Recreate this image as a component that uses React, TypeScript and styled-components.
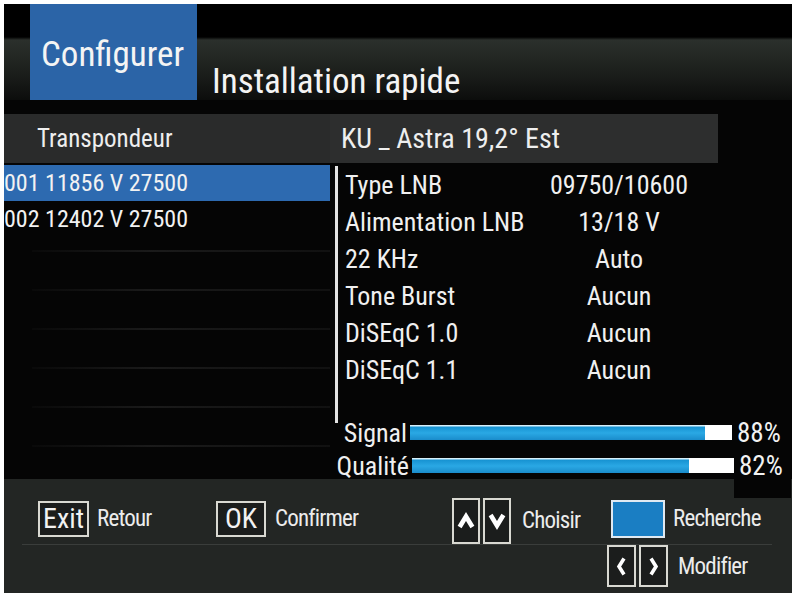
import React from 'react';
import styled, { createGlobalStyle } from 'styled-components';

const GlobalStyle = createGlobalStyle`
  html, body {
    margin: 0;
    padding: 0;
    background: #ffffff;
  }
  * {
    box-sizing: border-box;
  }
`;

const Frame = styled.div`
  width: 795px;
  height: 596px;
  padding: 4px 3px 3px 4px;
  background: #ffffff;
  font-family: Roboto, "Open Sans", "Liberation Sans", sans-serif;
  font-stretch: 75%;
  color: #f2f2f2;
`;

const Screen = styled.div`
  width: 100%;
  height: 100%;
  background: #050505;
  display: flex;
  flex-direction: column;
  overflow: hidden;
`;

const Header = styled.div`
  flex-shrink: 0;
  height: 96px;
  display: flex;
  align-items: flex-end;
  padding-left: 26px;
  background: linear-gradient(
    to bottom,
    #000 0px,
    #000 33px,
    #2b302c 36px,
    #1b1e1b 70px,
    #0c0d0c 96px
  );
`;

const Tab = styled.div`
  width: 167px;
  height: 96px;
  background: #2b64a7;
  display: flex;
  align-items: center;
  padding: 4px 0 0 11px;
  font-size: 35px;
  color: #f4f4f4;
`;

const Title = styled.div`
  margin-left: 15px;
  font-size: 35px;
  color: #f4f4f4;
  line-height: 36px;
`;

const HeadRow = styled.div`
  flex-shrink: 0;
  margin-top: 14px;
  height: 49px;
  display: flex;
`;

const HeadCell = styled.div<{ $w: number; $bg: string; $size: number; $pad: number }>`
  width: ${(p) => p.$w}px;
  background: ${(p) => p.$bg};
  padding-left: ${(p) => p.$pad}px;
  display: flex;
  align-items: center;
  font-size: ${(p) => p.$size}px;
  color: #eeeeee;
  white-space: nowrap;
`;

const Body = styled.div`
  flex: 1;
  display: flex;
  min-height: 0;
`;

const List = styled.div`
  width: 326px;
  padding-top: 2px;
  display: flex;
  flex-direction: column;
`;

const ListRow = styled.div<{ $active?: boolean }>`
  height: 36px;
  flex-shrink: 0;
  display: flex;
  align-items: center;
  font-size: 24px;
  color: #f2f2f2;
  background: ${(p) => (p.$active ? '#2d6ab0' : 'transparent')};
`;

const EmptyRow = styled.div`
  height: 39px;
  flex-shrink: 0;
  margin-left: 28px;
  background: linear-gradient(
      to right,
      rgba(50, 50, 50, 0.1),
      rgba(48, 48, 48, 0.5) 40%,
      rgba(44, 44, 44, 0.3)
    )
    bottom / 100% 2px no-repeat;

  &:nth-child(3) {
    margin-top: -24px;
  }
`;

const Details = styled.div`
  flex: 1;
  display: flex;
  flex-direction: column;
  padding-top: 3px;
`;

const Params = styled.div`
  flex-shrink: 0;
  margin-left: 5px;
  border-left: 3px solid #e4e4e4;
  height: 257px;
  padding-left: 7px;
`;

const ParamRow = styled.div`
  height: 37px;
  display: grid;
  grid-template-columns: 190px 168px;
  align-items: center;
  font-size: 26px;
  color: #f0f0f0;
  white-space: nowrap;
`;

const Value = styled.span`
  text-align: center;
`;

const Meters = styled.div`
  margin-top: -7px;
  display: flex;
  flex-direction: column;
`;

const MeterRow = styled.div`
  height: 33px;
  display: flex;
  align-items: center;
`;

const MeterLabel = styled.span<{ $w: number }>`
  width: ${(p) => p.$w}px;
  font-size: 26px;
  color: #f0f0f0;
  text-align: right;
  padding-right: 3px;
`;

const Bar = styled.div`
  width: 322px;
  height: 15px;
  background: #ffffff;
  display: flex;
`;

const BarFill = styled.div`
  height: 100%;
  background: linear-gradient(
    to bottom,
    #d6f0fb 0px,
    #d6f0fb 1px,
    #1793d2 2px,
    #2aa8e4 8px,
    #1a8ccb 15px
  );
`;

const Percent = styled.span<{ $tail?: boolean }>`
  width: 57px;
  padding-left: 5px;
  font-size: 27px;
  color: #f2f2f2;
  background: #050505;
  align-self: stretch;
  display: flex;
  align-items: center;
  position: relative;

  &::after {
    content: '';
    display: ${(p) => (p.$tail ? 'block' : 'none')};
    position: absolute;
    left: 0;
    right: 0;
    top: 100%;
    height: 16px;
    background: #050505;
  }
`;

const Footer = styled.div`
  flex-shrink: 0;
  height: 114px;
  background: #232624;
  display: flex;
  flex-direction: column;
`;

const FooterRow = styled.div<{ $h: number; $top: number; $line?: boolean }>`
  height: ${(p) => p.$h}px;
  display: grid;
  grid-template-columns: 178px 236px 159px auto;
  align-items: ${(p) => (p.$line ? 'center' : 'start')};
  padding: ${(p) => p.$top}px 0 0 16px;
  margin: 0 20px 0 18px;
  border-bottom: ${(p) => (p.$line ? '1px solid #3a3d3b' : 'none')};
`;

const Hint = styled.div<{ $col?: number; $shift?: number; $drop?: number }>`
  display: flex;
  align-items: center;
  gap: 3px;
  grid-column: ${(p) => p.$col ?? 'auto'};
  margin-left: ${(p) => p.$shift ?? 0}px;
  margin-top: ${(p) => p.$drop ?? 0}px;
`;

const Key = styled.div<{ $w: number; $h: number; $blue?: boolean }>`
  width: ${(p) => p.$w}px;
  height: ${(p) => p.$h}px;
  flex-shrink: 0;
  border: 2px solid ${(p) => (p.$blue ? '#dfe9f2' : '#d9d9d2')};
  background: ${(p) => (p.$blue ? '#1a7ec3' : '#1b1d1c')};
  display: flex;
  align-items: center;
  justify-content: center;
  font-size: 28px;
  color: #f2f2f2;

  svg {
    flex-shrink: 0;
    display: block;
  }
`;

const HintText = styled.span<{ $gap: number }>`
  margin-left: ${(p) => p.$gap}px;
  font-size: 23px;
  letter-spacing: -0.8px;
  color: #ececec;
`;

type Dir = 'up' | 'down' | 'left' | 'right';

const chevronPoints: Record<Dir, string> = {
  up: '2.6,15 9,4.5 15.4,15',
  down: '2.6,3 9,13.5 15.4,3',
  left: '8,2.5 3,10.5 8,18.5',
  right: '3,2.5 8,10.5 3,18.5',
};

const Chevron: React.FC<{ dir: Dir }> = ({ dir }) => {
  const vertical = dir === 'up' || dir === 'down';
  const w = vertical ? 18 : 11;
  const h = vertical ? 18 : 21;
  return (
    <svg width={w} height={h} viewBox={`0 0 ${w} ${h}`}>
      <polyline
        points={chevronPoints[dir]}
        fill="none"
        stroke="#ffffff"
        strokeWidth={vertical ? 4.6 : 3.6}
        strokeLinecap="butt"
        strokeLinejoin="miter"
      />
    </svg>
  );
};

const App: React.FC = () => {
  const params: [string, string][] = [
    ['Type LNB', '09750/10600'],
    ['Alimentation LNB', '13/18 V'],
    ['22 KHz', 'Auto'],
    ['Tone Burst', 'Aucun'],
    ['DiSEqC 1.0', 'Aucun'],
    ['DiSEqC 1.1', 'Aucun'],
  ];

  return (
    <>
      <GlobalStyle />
      <Frame>
        <Screen>
          <Header>
            <Tab>Configurer</Tab>
            <Title>Installation rapide</Title>
          </Header>

          <HeadRow>
            <HeadCell $w={326} $bg="#2a2b2b" $size={25} $pad={33}>
              Transpondeur
            </HeadCell>
            <HeadCell $w={388} $bg="#2d2e2e" $size={28} $pad={11}>
              KU _ Astra 19,2° Est
            </HeadCell>
          </HeadRow>

          <Body>
            <List>
              <ListRow $active>001 11856 V 27500</ListRow>
              <ListRow>002 12402 V 27500</ListRow>
              {[0, 1, 2, 3, 4, 5].map((i) => (
                <EmptyRow key={i} />
              ))}
            </List>

            <Details>
              <Params>
                {params.map(([label, value]) => (
                  <ParamRow key={label}>
                    <span>{label}</span>
                    <Value>{value}</Value>
                  </ParamRow>
                ))}
              </Params>
              <Meters>
                <MeterRow>
                  <MeterLabel $w={80}>Signal</MeterLabel>
                  <Bar>
                    <BarFill style={{ width: '91.5%' }} />
                  </Bar>
                  <Percent>88%</Percent>
                </MeterRow>
                <MeterRow>
                  <MeterLabel $w={82}>Qualité</MeterLabel>
                  <Bar>
                    <BarFill style={{ width: '86%' }} />
                  </Bar>
                  <Percent $tail>82%</Percent>
                </MeterRow>
              </Meters>
            </Details>
          </Body>

          <Footer>
            <FooterRow $h={66} $top={14} $line>
              <Hint>
                <Key $w={51} $h={36}>Exit</Key>
                <HintText $gap={5}>Retour</HintText>
              </Hint>
              <Hint>
                <Key $w={50} $h={36}>OK</Key>
                <HintText $gap={6}>Confirmer</HintText>
              </Hint>
              <Hint $drop={4}>
                <Key $w={28} $h={46}>
                  <Chevron dir="up" />
                </Key>
                <Key $w={28} $h={46}>
                  <Chevron dir="down" />
                </Key>
                <HintText $gap={8}>Choisir</HintText>
              </Hint>
              <Hint>
                <Key $w={54} $h={38} $blue />
                <HintText $gap={5}>Recherche</HintText>
              </Hint>
            </FooterRow>
            <FooterRow $h={47} $top={0}>
              <Hint $col={4} $shift={-4}>
                <Key $w={29} $h={42}>
                  <Chevron dir="left" />
                </Key>
                <Key $w={29} $h={42}>
                  <Chevron dir="right" />
                </Key>
                <HintText $gap={7}>Modifier</HintText>
              </Hint>
            </FooterRow>
          </Footer>
        </Screen>
      </Frame>
    </>
  );
};

export default App;
